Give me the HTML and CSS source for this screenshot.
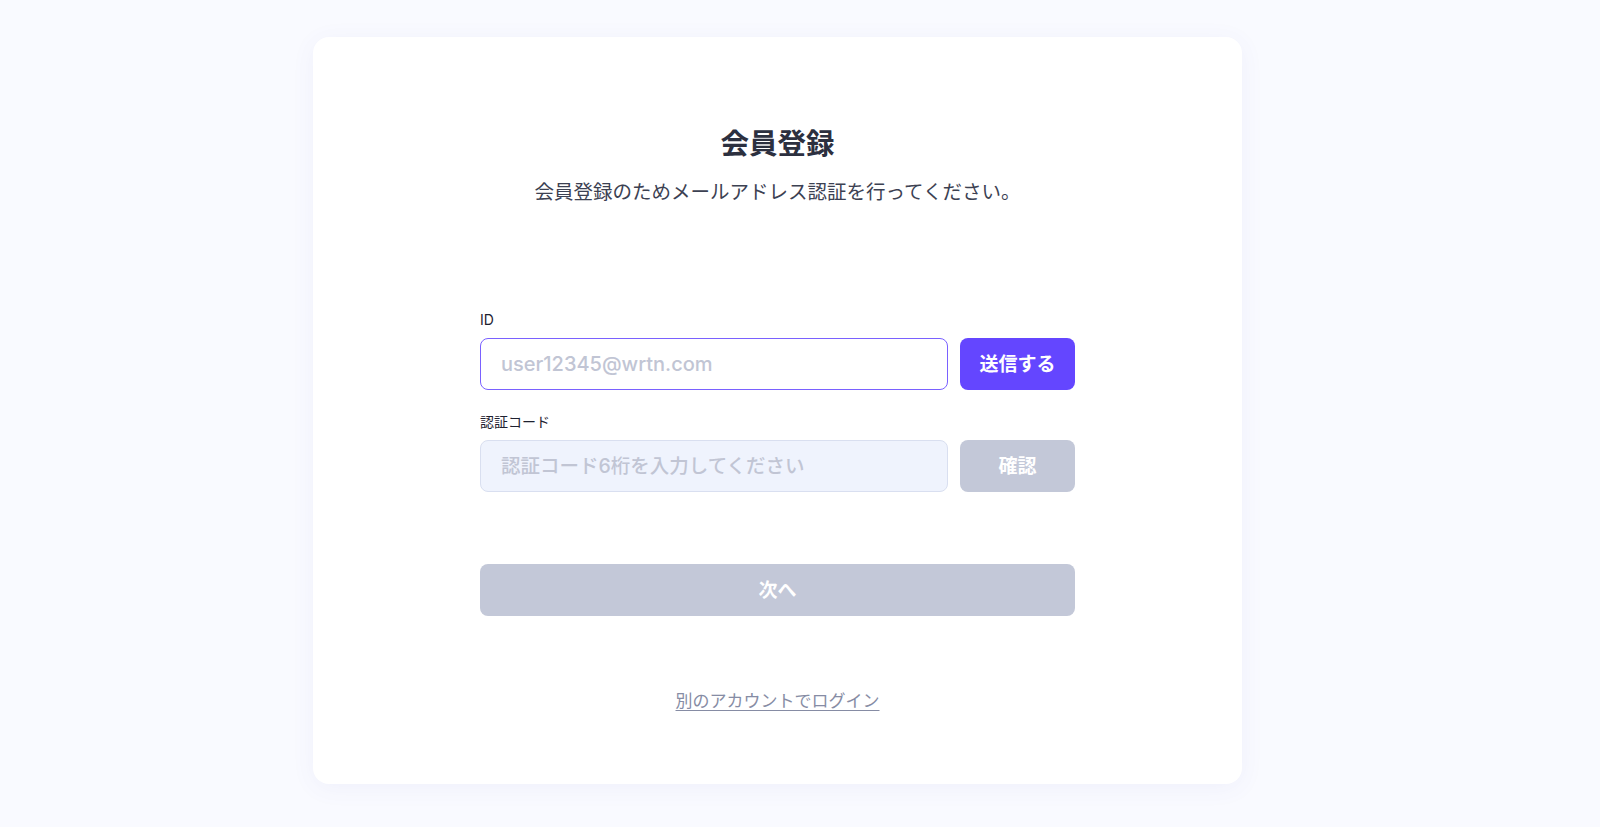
FILE: index.html
```html
<!DOCTYPE html>
<html lang="ja">
<head>
<meta charset="utf-8">
<title>会員登録</title>
<link rel="stylesheet" href="styles.css">
</head>
<body>
<main class="card">
  <h1 class="title">会員登録</h1>
  <p class="subtitle">会員登録のためメールアドレス認証を行ってください。</p>
  <form class="form">
    <label class="label" for="id">ID</label>
    <div class="row">
      <input class="input input-active" id="id" type="text" placeholder="user12345@wrtn.com">
      <button class="btn btn-primary" type="button">送信する</button>
    </div>
    <label class="label label-gap" for="code">認証コード</label>
    <div class="row">
      <input class="input input-disabled" id="code" type="text" placeholder="認証コード6桁を入力してください">
      <button class="btn btn-disabled" type="button">確認</button>
    </div>
    <button class="btn btn-next" type="button">次へ</button>
  </form>
  <a class="link" href="#">別のアカウントでログイン</a>
</main>
</body>
</html>
```
FILE: styles.css
```css
* { box-sizing: border-box; }
html, body { margin: 0; padding: 0; }
body {
  background: #f9faff;
  font-family: Inter, "Noto Sans CJK JP", sans-serif;
  padding-top: 37px;
  height: 827px;
  overflow: hidden;
}
.card {
  margin-left: 313px;
  width: 929px;
  height: 747px;
  background: #ffffff;
  border-radius: 16px;
  box-shadow: 0 4px 24px rgba(90, 90, 180, 0.06);
  display: flex;
  flex-direction: column;
  align-items: center;
  padding-top: 89px;
}
.title {
  margin: 0;
  font-size: 28.5px;
  line-height: 36px;
  font-weight: 700;
  color: #2c303f;
}
.subtitle {
  margin: 16px 0 0;
  font-size: 19.5px;
  line-height: 28px;
  font-weight: 400;
  color: #3c4152;
}
.form {
  width: 595px;
  margin-top: 104px;
  display: flex;
  flex-direction: column;
}
.label {
  font-size: 14px;
  line-height: 20px;
  font-weight: 400;
  color: #1e2130;
  margin-bottom: 8px;
}
.label-gap { margin-top: 22px; }
.row {
  display: flex;
  gap: 12px;
}
.input {
  flex: 1;
  height: 52px;
  border-radius: 8px;
  padding: 0 20px;
  font-family: Inter, "Noto Sans CJK JP", sans-serif;
  font-size: 19.5px;
  font-weight: 500;
  outline: none;
}
.input-active { font-size: 20px; }
.input::placeholder { color: #c1c5d4; }
.input-active {
  border: 1px solid #7a61ff;
  background: #ffffff;
}
.input-disabled {
  border: 1px solid #d9dff0;
  background: #eff3fd;
}
.btn {
  border: none;
  border-radius: 8px;
  height: 52px;
  padding: 0 0 3px;
  color: #ffffff;
  font-family: Inter, "Noto Sans CJK JP", sans-serif;
  font-size: 19px;
  font-weight: 700;
}
.row .btn { width: 115px; }
.btn-primary { background: #6446ff; }
.btn-disabled { background: #c3c8d8; }
.btn-next {
  margin-top: 72px;
  width: 100%;
  background: #c3c8d8;
  font-weight: 700;
}
.link {
  margin-top: 73px;
  font-size: 17px;
  line-height: 24px;
  color: #868ca4;
  text-decoration: underline;
  text-underline-offset: 3px;
}
```
